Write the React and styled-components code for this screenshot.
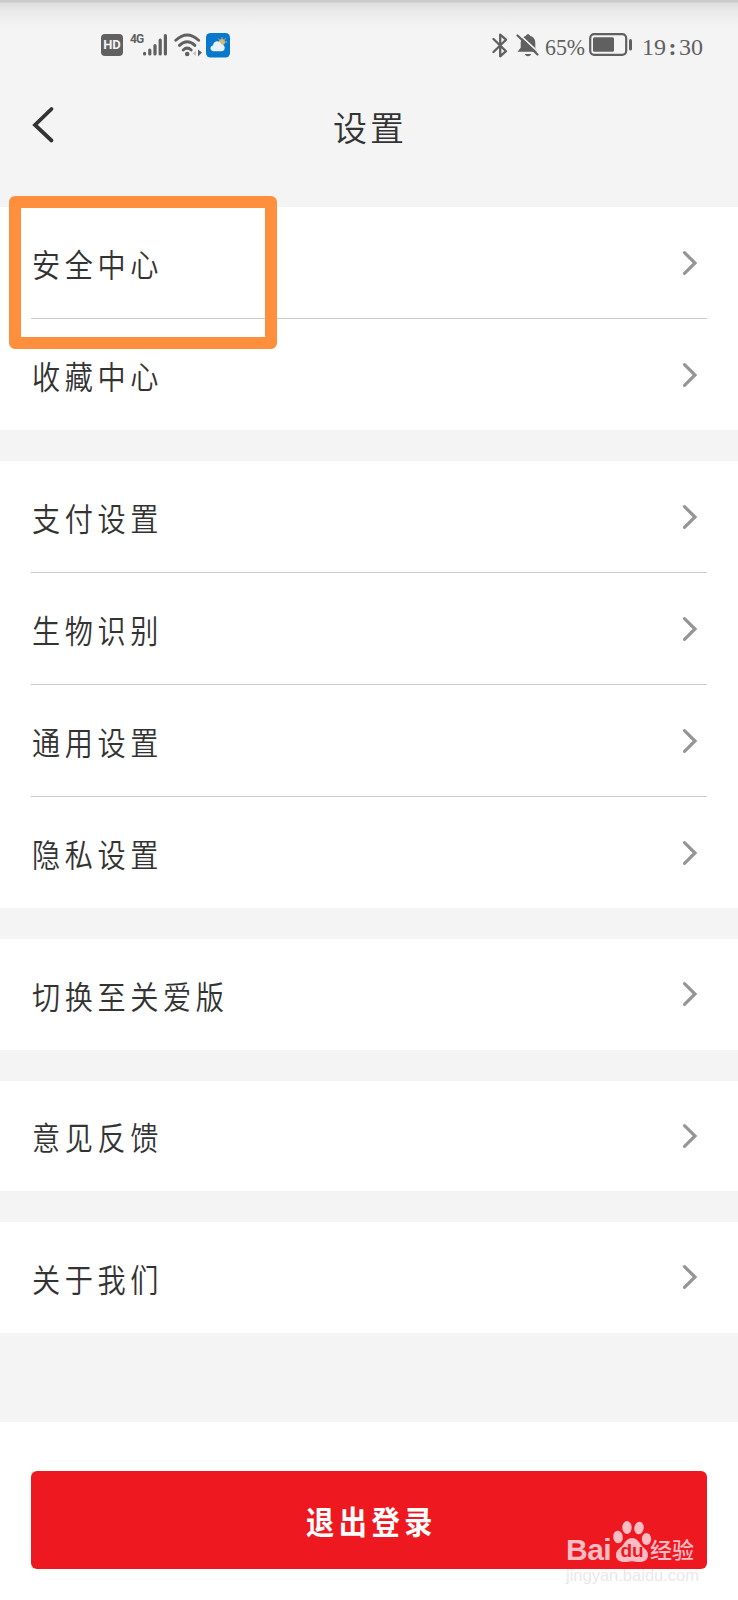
import React from "react";
import styled, { createGlobalStyle } from "styled-components";

const groups = [
    ["安全中心", "收藏中心"],
    ["支付设置", "生物识别", "通用设置", "隐私设置"],
    ["切换至关爱版"],
    ["意见反馈"],
    ["关于我们"],
];

const App = () => {
    return (
        <Page>
            <GlobalStyle />
            <StatusBar>
                <StatusLeft>
                    <HdBadge>HD</HdBadge>
                    <NetworkType>4G</NetworkType>
                    <SignalIcon />
                    <WifiIcon />
                    <WeatherIcon />
                </StatusLeft>
                <StatusRight>
                    <BluetoothIcon />
                    <MutedIcon />
                    <Battery>65%</Battery>
                    <BatteryIcon />
                    <Clock>
                        19<Colon>:</Colon>30
                    </Clock>
                </StatusRight>
            </StatusBar>
            <Header>
                <BackButton aria-label="返回">
                    <svg width="24" height="38" viewBox="0 0 24 38">
                        <path
                            d="M20.500 3 4 19l16.500 15.500"
                            fill="none"
                            stroke="#333"
                            strokeWidth="3.800"
                            strokeLinecap="round"
                        />
                    </svg>
                </BackButton>
                <Title>设置</Title>
            </Header>
            <Main>
                {groups.map((items) => (
                    <Group key={items[0]}>
                        {items.map((label) => (
                            <Row key={label}>
                                <Label>{label}</Label>
                                <Chevron />
                            </Row>
                        ))}
                    </Group>
                ))}
                <Highlight />
            </Main>
            <Footer>
                <LogoutButton>
                    <LogoutText>退出登录</LogoutText>
                </LogoutButton>
                <Watermark>
                    <Brand>
                        <BrandName>Bai</BrandName>
                        <Paw>
                            <PawIcon />
                            <PawText>du</PawText>
                        </Paw>
                        <BrandSuffix>经验</BrandSuffix>
                    </Brand>
                    <BrandUrl>jingyan.baidu.com</BrandUrl>
                </Watermark>
            </Footer>
        </Page>
    );
};

const SignalIcon = () => (
    <SignalSvg width="26" height="24" viewBox="0 0 26 24">
        <g stroke="#606060" strokeWidth="3.200" strokeLinecap="round">
            <path d="M2.600 21v-.6M7.800 21v-4M13 21v-8.500M18.200 21V7M23.400 21V2.500" />
        </g>
    </SignalSvg>
);

const WifiIcon = () => (
    <WifiSvg width="28" height="24" viewBox="0 0 28 24">
        <g fill="none" stroke="#606060" strokeWidth="2.900" strokeLinecap="round">
            <path d="M1.800 7.300Q13.200-3.300 24.600 7.300" />
            <path d="M5.500 12.400Q13.200 5 20.900 12.400" />
            <path d="M9.200 17Q13.200 13.200 17.200 17" />
        </g>
        <circle cx="13.200" cy="21" r="2.300" fill="#606060" />
        <path d="m22 17.500-3.500 3 3.500 2.500z" fill="#c8c8c8" />
        <path d="m24 16.500 4 3-4 4z" fill="#606060" />
    </WifiSvg>
);

const WeatherIcon = () => (
    <WeatherSvg width="24" height="25" viewBox="0 0 24 25">
        <rect width="24" height="24.500" rx="4.500" fill="#0878cb" />
        <circle cx="16" cy="9" r="3" fill="#d6b878" />
        <path
            d="m16 4.500v1M19.500 5.500l-.7.8M20.700 9h-1M12.500 5.800l.6.700"
            stroke="#d6b878"
            strokeLinecap="round"
        />
        <path
            d="M7.800 18.200C3.500 18.200 3.600 12.800 7 12.500 7.600 7.200 14 7 15.300 11.200c4.500.2 4.600 7 .2 7z"
            fill="#e8f2fb"
        />
    </WeatherSvg>
);

const BluetoothIcon = () => (
    <svg width="16" height="25" viewBox="0 0 16 25">
        <path
            d="M1.500 6 14 18.200 8.200 23.300V1.700L14 6.700 1.500 19"
            fill="none"
            stroke="#606060"
            strokeWidth="2.300"
            strokeLinecap="round"
            strokeLinejoin="round"
        />
    </svg>
);

const MutedIcon = () => (
    <MutedSvg width="24" height="25" viewBox="0 0 24 25">
        <path
            d="M12 1.200c1 0 1.800.5 2 1.500 3.500 1 5.300 3.500 5.300 7v5l2.700 4H1.500l3.200-4v-5c0-3.500 2-6 5.300-7 .2-1 1-1.500 2-1.500zM9 21h6c-.5 3-5.500 3-6 0z"
            fill="#606060"
        />
        <path d="M3 1.200 23.500 20.200" stroke="#f4f4f4" strokeWidth="1.600" />
        <path d="M1.500 2.500 21.500 21.500" stroke="#606060" strokeWidth="2.200" strokeLinecap="round" />
    </MutedSvg>
);

const BatteryIcon = () => (
    <BatterySvg width="44" height="24" viewBox="0 0 44 24">
        <rect x="1.200" y="1.200" width="36" height="20.600" rx="4" fill="none" stroke="#606060" strokeWidth="2.200" />
        <rect x="4" y="4.200" width="21" height="14.600" rx="1.500" fill="#606060" />
        <rect x="40" y="6" width="3" height="11.500" rx="1.500" fill="#606060" />
    </BatterySvg>
);

const Chevron = () => (
    <svg width="16" height="26" viewBox="0 0 16 26">
        <path
            d="M2.500 2.700 13 13 2.500 23.300"
            fill="none"
            stroke="#959595"
            strokeWidth="3.200"
            strokeLinecap="round"
        />
    </svg>
);

const PawIcon = () => (
    <svg width="40" height="43" viewBox="0 0 40 43">
        <g fill="#ffbcc3">
            <ellipse cx="6" cy="17" rx="4.800" ry="6.300" transform="rotate(-8 6 17)" />
            <ellipse cx="15" cy="7.500" rx="4.700" ry="6.500" />
            <ellipse cx="27" cy="8" rx="4.700" ry="6.300" transform="rotate(10 27 8)" />
            <ellipse cx="34.500" cy="19" rx="4.700" ry="6" />
            <path d="M20 18c4 0 7 3.500 9 7 3 3.500 7 5 7 10 0 5-4 7-8 7-3 0-5-.8-8-.8s-5 .8-8 .8c-4 0-8-2-8-7s4-6.500 7-10c2-3.500 5-7 9-7z" />
        </g>
    </svg>
);

const GlobalStyle = createGlobalStyle`
    body {
        margin: 0;
        background: #f4f4f4;
    }

    * {
        box-sizing: border-box;
    }
`;

const Page = styled.div`
    width: 738px;
    height: 1600px;
    display: flex;
    flex-direction: column;
    overflow: hidden;
    color: #333;
    font-family: "Noto Sans CJK SC", sans-serif;
    background: linear-gradient(#cacaca 0, #cacaca 2px, #dedede 3px, #e9e9e9 11px, #f4f4f4 26px);
`;

const StatusBar = styled.div`
    height: 90px;
    padding: 0 35px 0 101px;
    display: flex;
    align-items: center;
    justify-content: space-between;
    color: #606060;
`;

const StatusLeft = styled.div`
    display: flex;
    align-items: center;
`;

const StatusRight = styled.div`
    display: flex;
    align-items: center;
`;

const HdBadge = styled.span`
    width: 22px;
    height: 22px;
    border-radius: 4px;
    background: #606060;
    color: #f4f4f4;
    font: bold 13px/22px Roboto, sans-serif;
    text-align: center;
`;

const NetworkType = styled.span`
    width: 13px;
    margin: 0 0 13px 7px;
    font: bold 12px/14px Roboto, sans-serif;
    letter-spacing: -1px;
`;

const SignalSvg = styled.svg`
    margin-left: -1px;
`;

const WifiSvg = styled.svg`
    margin-left: 6px;
`;

const WeatherSvg = styled.svg`
    margin-left: 4px;
`;

const MutedSvg = styled.svg`
    margin-left: 8px;
`;

const BatterySvg = styled.svg`
    margin-left: 4px;
`;

const Battery = styled.span`
    margin: 4px 0 0 5px;
    font: 24px/24px "Liberation Serif", serif;
    transform: scaleX(0.91);
    transform-origin: left;
    width: 40px;
`;

const Clock = styled.span`
    margin: 4px 0 0 9px;
    display: flex;
    font: 24px/24px "Liberation Serif", serif;
`;

const Colon = styled.span`
    width: 13px;
    font-weight: bold;
    text-align: center;
`;

const Header = styled.header`
    height: 117px;
    padding: 0 31px 46px;
    display: grid;
    grid-template-columns: 1fr auto 1fr;
    align-items: center;
`;

const BackButton = styled.button`
    display: flex;
    justify-self: start;
    margin-top: -2px;
    padding: 0;
    border: 0;
    background: none;
`;

const Title = styled.h1`
    margin: 2px 0 0 2px;
    font-size: 34px;
    font-weight: 350;
    line-height: 40px;
    letter-spacing: 3px;
`;

const Main = styled.main`
    position: relative;
    height: 1126px;
    display: flex;
    flex-direction: column;
    gap: 31px;
`;

const Group = styled.section`
    padding: 0 31px;
    background: #fff;
`;

const Row = styled.div`
    height: 112px;
    padding: 0 9px 0 1px;
    display: flex;
    align-items: center;
    justify-content: space-between;
    border-bottom: 1px solid #ccc;

    &:last-child {
        height: 111px;
        border-bottom: 0;
    }

    &:only-child {
        height: 110.6px;
    }
`;

const Label = styled.span`
    margin-top: 1px;
    font-size: 32px;
    font-weight: 350;
    line-height: 40px;
    letter-spacing: 5.2px;
    transform: scaleX(0.88);
    transform-origin: left;
`;

// marker frame drawn over the first entry
const Highlight = styled.div`
    position: absolute;
    top: -11px;
    left: 9px;
    width: 268px;
    height: 153px;
    border: 12px solid #ff8f3c;
    border-radius: 6px;
`;

const Footer = styled.footer`
    position: relative;
    flex: 1;
    margin-top: 89px;
    padding: 49px 31px 0;
    background: #fff;
`;

const LogoutButton = styled.button`
    width: 100%;
    height: 98px;
    display: flex;
    align-items: center;
    justify-content: center;
    border: 0;
    border-radius: 6px;
    background: #ed1820;
    color: #fff;
    font-family: inherit;
`;

const LogoutText = styled.span`
    margin: 0 0 1px 4px;
    font-size: 32px;
    font-weight: 700;
    line-height: 40px;
    letter-spacing: 5.2px;
    transform: scaleX(0.88);
`;

const Watermark = styled.div`
    position: absolute;
    top: 98px;
    left: 566px;
    width: 140px;
`;

const Brand = styled.div`
    height: 43px;
    display: flex;
    align-items: flex-end;
    color: #ffbcc3;
`;

const BrandName = styled.span`
    width: 46px;
    font: bold 30px/26px "Liberation Sans", sans-serif;
    letter-spacing: -0.5px;
`;

const Paw = styled.div`
    position: relative;
    width: 38px;
    height: 43px;
`;

const PawText = styled.span`
    position: absolute;
    left: 0;
    bottom: 2px;
    width: 40px;
    color: #ed1820;
    font: bold 19px/20px "Liberation Sans", sans-serif;
    text-align: center;
`;

const BrandSuffix = styled.span`
    margin-bottom: 3px;
    font-size: 22px;
    font-weight: 500;
    line-height: 24px;
`;

const BrandUrl = styled.div`
    margin-top: 3px;
    color: #e9e9e9;
    font: 16.500px/18px "Liberation Sans", sans-serif;
`;

export default App;
